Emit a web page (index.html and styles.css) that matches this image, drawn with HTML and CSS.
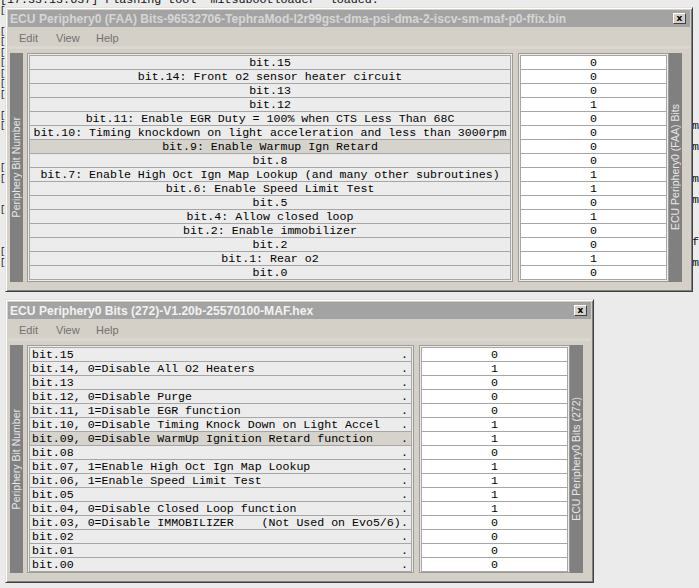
FILE: index.html
```html
<!DOCTYPE html>
<html>
<head>
<meta charset="utf-8">
<link rel="stylesheet" href="styles.css">
</head>
<body>
<div class="log">
  <div class="logline first">[17.33.13.637] Flashing tool 'mitsubootloader' loaded.</div>
  <div class="logline"><span class="lead">[</span></div>
  <div class="logline"></div>
  <div class="logline"><span class="lead">[</span></div>
  <div class="logline"><span class="lead">[</span></div>
  <div class="logline"><span class="lead">[</span></div>
  <div class="logline"><span class="lead">[</span></div>
  <div class="logline"><span class="lead">[</span></div>
  <div class="logline"><span class="lead">[</span></div>
  <div class="logline"><span class="lead">[</span></div>
  <div class="logline"></div>
  <div class="logline"><span class="lead">[</span></div>
  <div class="logline"><span class="lead">[</span><span class="tail">m</span></div>
  <div class="logline"></div>
  <div class="logline"><span class="tail">m</span></div>
  <div class="logline"></div>
  <div class="logline"><span class="lead">[</span></div>
  <div class="logline"><span class="lead">[</span><span class="tail">m</span></div>
  <div class="logline"></div>
  <div class="logline"><span class="tail">m</span></div>
  <div class="logline"><span class="lead">[</span></div>
  <div class="logline"></div>
  <div class="logline"></div>
  <div class="logline"><span class="tail">f</span></div>
  <div class="logline"><span class="lead">[</span></div>
  <div class="logline"><span class="lead">[</span><span class="tail">m</span></div>
</div>

<div class="win win-top">
  <div class="titlebar title-top">
    <span class="title">ECU Periphery0 (FAA) Bits-96532706-TephraMod-l2r99gst-dma-psi-dma-2-iscv-sm-maf-p0-ffix.bin</span>
    <span class="close">x</span>
  </div>
  <div class="menubar"><span class="m-edit">Edit</span><span class="m-view">View</span><span>Help</span></div>
  <div class="content">
    <div class="vbar"><span>Periphery Bit Number</span></div>
    <div class="panel names">
      <div class="rows centered">
        <div class="row">bit.15</div>
        <div class="row">bit.14: Front o2 sensor heater circuit</div>
        <div class="row">bit.13</div>
        <div class="row">bit.12</div>
        <div class="row">bit.11: Enable EGR Duty = 100% when CTS Less Than 68C</div>
        <div class="row">bit.10: Timing knockdown on light acceleration and less than 3000rpm</div>
        <div class="row selected">bit.9: Enable Warmup Ign Retard</div>
        <div class="row">bit.8</div>
        <div class="row">bit.7: Enable High Oct Ign Map Lookup (and many other subroutines)</div>
        <div class="row">bit.6: Enable Speed Limit Test</div>
        <div class="row">bit.5</div>
        <div class="row">bit.4: Allow closed loop</div>
        <div class="row">bit.2: Enable immobilizer</div>
        <div class="row">bit.2</div>
        <div class="row">bit.1: Rear o2</div>
        <div class="row">bit.0</div>
      </div>
    </div>
    <div class="panel values">
      <div class="rows centered">
        <div class="row">0</div><div class="row">0</div><div class="row">0</div><div class="row">1</div>
        <div class="row">0</div><div class="row">0</div><div class="row">0</div><div class="row">0</div>
        <div class="row">1</div><div class="row">1</div><div class="row">0</div><div class="row">1</div>
        <div class="row">0</div><div class="row">0</div><div class="row">1</div><div class="row">0</div>
      </div>
    </div>
    <div class="vbar"><span>ECU Periphery0 (FAA) Bits</span></div>
  </div>
</div>

<div class="win win-bot">
  <div class="titlebar title-bot">
    <span class="title">ECU Periphery0 Bits (272)-V1.20b-25570100-MAF.hex</span>
    <span class="close">x</span>
  </div>
  <div class="menubar"><span class="m-edit">Edit</span><span class="m-view">View</span><span>Help</span></div>
  <div class="content">
    <div class="vbar"><span>Periphery Bit Number</span></div>
    <div class="panel names">
      <div class="rows">
        <div class="row split"><span>bit.15</span><span>.</span></div>
        <div class="row split"><span>bit.14, 0=Disable All O2 Heaters</span><span>.</span></div>
        <div class="row split"><span>bit.13</span><span>.</span></div>
        <div class="row split"><span>bit.12, 0=Disable Purge</span><span>.</span></div>
        <div class="row split"><span>bit.11, 1=Disable EGR function</span><span>.</span></div>
        <div class="row split"><span>bit.10, 0=Disable Timing Knock Down on Light Accel</span><span>.</span></div>
        <div class="row split selected"><span>bit.09, 0=Disable WarmUp Ignition Retard function</span><span>.</span></div>
        <div class="row split"><span>bit.08</span><span>.</span></div>
        <div class="row split"><span>bit.07, 1=Enable High Oct Ign Map Lookup</span><span>.</span></div>
        <div class="row split"><span>bit.06, 1=Enable Speed Limit Test</span><span>.</span></div>
        <div class="row split"><span>bit.05</span><span>.</span></div>
        <div class="row split"><span>bit.04, 0=Disable Closed Loop function</span><span>.</span></div>
        <div class="row split"><span>bit.03, 0=Disable IMMOBILIZER    (Not Used on Evo5/6)</span><span>.</span></div>
        <div class="row split"><span>bit.02</span><span>.</span></div>
        <div class="row split"><span>bit.01</span><span>.</span></div>
        <div class="row split"><span>bit.00</span><span>.</span></div>
      </div>
    </div>
    <div class="panel values">
      <div class="rows centered">
        <div class="row">0</div><div class="row">1</div><div class="row">0</div><div class="row">0</div>
        <div class="row">0</div><div class="row">1</div><div class="row">1</div><div class="row">0</div>
        <div class="row">1</div><div class="row">1</div><div class="row">1</div><div class="row">1</div>
        <div class="row">0</div><div class="row">0</div><div class="row">0</div><div class="row">0</div>
      </div>
    </div>
    <div class="vbar"><span>ECU Periphery0 Bits (272)</span></div>
  </div>
</div>
</body>
</html>
```

FILE: styles.css
```css
* { box-sizing: border-box; }
html, body { margin: 0; padding: 0; }
body {
  width: 699px;
  height: 588px;
  overflow: hidden;
  position: relative;
  background: #ebebeb;
  font-family: "Liberation Sans", Arial, sans-serif;
}

.log {
  margin-top: -5px;
  font-family: "Liberation Mono", "Courier New", monospace;
  color: #111;
}
.logline {
  height: 10.5px;
  line-height: 10.5px;
  display: flex;
  justify-content: space-between;
  white-space: pre;
}
.logline.first { font-size: 11.7px; }
.lead { font-size: 9px; }
.tail { font-size: 11.7px; margin-left: auto; }

.win {
  position: absolute;
  left: 5px;
  display: flex;
  flex-direction: column;
  background: #d4d0c8;
  border: 1px solid;
  border-color: #e4e2dc #404040 #404040 #e4e2dc;
  box-shadow: inset 1px 1px 0 #ffffff, inset -1px -1px 0 #808080;
  padding: 2px;
}
.win-top { top: 7px; width: 688px; height: 285px; }
.win-bot { top: 299px; width: 589px; height: 284px; }

.titlebar {
  height: 17px;
  flex: none;
  display: flex;
  align-items: center;
  justify-content: space-between;
  padding: 0 4px 0 2px;
  background: #a3a3a3;
}
.title {
  font-weight: bold;
  font-size: 12.1px;
  white-space: nowrap;
}
.title-top .title { color: #d6d6d6; }
.title-bot .title { color: #f2f2f2; }

.close {
  width: 13px;
  height: 11px;
  flex: none;
  display: flex;
  align-items: center;
  justify-content: center;
  background: #d4d0c8;
  border: 1px solid;
  border-color: #ffffff #404040 #404040 #ffffff;
  font-family: "DejaVu Sans", sans-serif;
  font-weight: bold;
  font-size: 9px;
  line-height: 1;
  color: #000;
  padding-bottom: 1px;
}

.menubar {
  height: 22px;
  flex: none;
  display: flex;
  align-items: center;
  padding-left: 11px;
  font-size: 11px;
  color: #717171;
  background: linear-gradient(#d4d0c8 0, #d4d0c8 19px, #dedbd5 20px, #d8d5ce 22px);
}
.m-edit { width: 37px; }
.m-view { width: 40px; }

.content {
  flex: 1;
  display: flex;
  padding: 4px 8px 7px 2px;
  min-height: 0;
}

.vbar {
  width: 13px;
  flex: none;
  background: #808080;
  display: flex;
  align-items: center;
  justify-content: center;
}
.vbar span {
  writing-mode: vertical-rl;
  transform: rotate(180deg);
  color: #e8e8e8;
  font-size: 10.5px;
  white-space: nowrap;
  line-height: 13px;
}

.panel {
  border: 1px solid #9e9b94;
  padding: 1px;
  background: #eeece8;
}
.names { flex: 1; margin: 0 5px 0 4px; min-width: 0; }
.values { width: 151px; flex: none; }

.rows {
  border: 1px solid #a6a6a6;
  font-family: "Liberation Mono", "Courier New", monospace;
  font-size: 11.6px;
  color: #000;
}
.row {
  height: 14px;
  line-height: 13px;
  border-top: 1px solid #a6a6a6;
  background: #ececec;
  white-space: pre;
}
.row:first-child { height: 13px; border-top: 0; }
.centered .row { text-align: center; }
.values .row { background: #ffffff; }
.row.selected { background: #d6d3cc; }
.split {
  display: flex;
  justify-content: space-between;
  padding: 0 3px 0 2px;
}
```
